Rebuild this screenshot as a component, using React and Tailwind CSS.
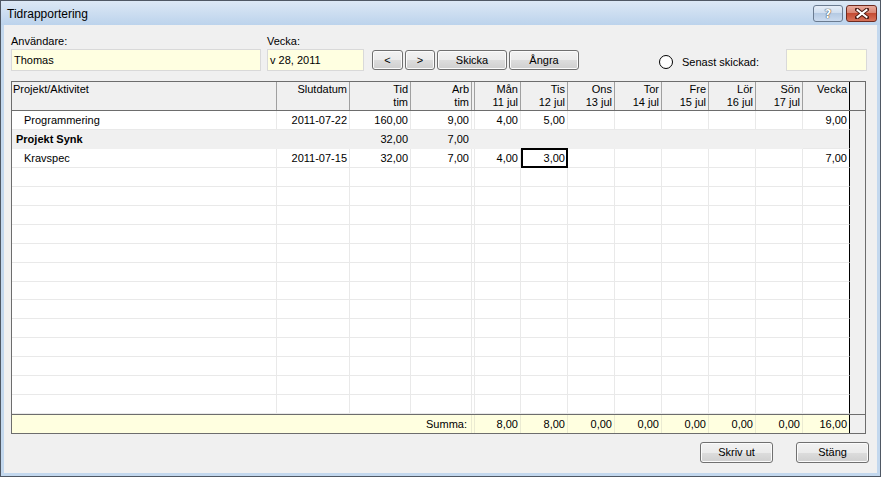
import React from 'react';

// Column widths include the right border line of each column
const COLS = [
  { key: 'name', w: 'w-[265px]' },
  { key: 'slut', w: 'w-[73px]' },
  { key: 'tid', w: 'w-[61px]' },
  { key: 'arb', w: 'w-[61px]' },
  { key: 'gap', w: 'w-[3px]' },
  { key: 'man', w: 'w-[46px]' },
  { key: 'tis', w: 'w-[47px]' },
  { key: 'ons', w: 'w-[47px]' },
  { key: 'tor', w: 'w-[47px]' },
  { key: 'fre', w: 'w-[47px]' },
  { key: 'lor', w: 'w-[47px]' },
  { key: 'son', w: 'w-[47px]' },
  { key: 'vecka', w: 'w-[47px]' },
];

const HEADER = {
  name: ['Projekt/Aktivitet'],
  slut: ['Slutdatum'],
  tid: ['Tid', 'tim'],
  arb: ['Arb', 'tim'],
  gap: [],
  man: ['Mån', '11 jul'],
  tis: ['Tis', '12 jul'],
  ons: ['Ons', '13 jul'],
  tor: ['Tor', '14 jul'],
  fre: ['Fre', '15 jul'],
  lor: ['Lör', '16 jul'],
  son: ['Sön', '17 jul'],
  vecka: ['Vecka'],
};

const ROWS = [
  { name: 'Programmering', indent: true, slut: '2011-07-22', tid: '160,00', arb: '9,00', man: '4,00', tis: '5,00', vecka: '9,00' },
  { name: 'Projekt Synk', group: true, tid: '32,00', arb: '7,00' },
  { name: 'Kravspec', indent: true, slut: '2011-07-15', tid: '32,00', arb: '7,00', man: '4,00', tis: '3,00', vecka: '7,00', selected: 'tis' },
];

const SUMS = { man: '8,00', tis: '8,00', ons: '0,00', tor: '0,00', fre: '0,00', lor: '0,00', son: '0,00', vecka: '16,00' };

const WinButton = ({ children, className = '' }) => (
  <button
    className={`flex items-center justify-center rounded-[3px] border border-[#707070] bg-[linear-gradient(#f2f2f2_0%,#ebebeb_50%,#dddddd_50%,#cfcfcf_100%)] shadow-[inset_0_0_0_1px_#fbfbfb] text-[11px] leading-none text-black ${className}`}
  >
    {children}
  </button>
);

const Field = ({ label, value, width }) => (
  <div className={`flex flex-col ${width}`}>
    <span className="leading-[13px] mb-[1px]">{label}</span>
    <div className="h-[22px] border border-[#d9d9d9] bg-[#ffffe1] pl-[2px] flex items-center">
      {value}
    </div>
  </div>
);

const HeaderRow = () => (
  <div className="flex h-[29px] border-b border-[#6d6d6d] bg-[#f0f0f0]">
    {COLS.map((c) => {
      const lines = HEADER[c.key];
      const border = c.key === 'vecka' ? 'border-black' : 'border-[#a0a0a0]';
      const align = c.key === 'name' ? 'text-left pl-[1px]' : 'text-right pr-[2px]';
      return (
        <div key={c.key} className={`${c.w} shrink-0 h-full border-r ${border} ${align} pt-[1px] leading-[13px]`}>
          {lines.map((l) => (
            <div key={l}>{l}</div>
          ))}
        </div>
      );
    })}
    <div className="flex-1" />
  </div>
);

const DataRow = ({ row }) => (
  <div className={`flex h-[19px] ${row.group ? 'bg-[#f0f0f0]' : 'bg-white'}`}>
    {COLS.map((c) => {
      const val = row[c.key];
      const isSel = row.selected === c.key;
      let cls = `${c.w} shrink-0 flex items-center`;
      if (isSel) {
        cls += ' -mt-px h-[20px] border-2 border-black relative';
      } else if (c.key === 'vecka') {
        cls += ' h-full border-r border-r-black border-b border-b-[#e9e9e9]';
      } else if (row.group) {
        cls += ' h-full border-r border-b border-[#f0f0f0]';
      } else {
        cls += ' h-full border-r border-b border-[#e9e9e9]';
      }
      if (c.key === 'name') {
        cls += row.group ? ' pl-[4px] font-bold justify-start' : ' pl-[12px] justify-start';
      } else {
        cls += isSel ? ' justify-end pr-[1px]' : ' justify-end pr-[2px]';
      }
      return (
        <div key={c.key} className={cls}>
          {val}
        </div>
      );
    })}
    <div className="flex-1 bg-[#f0f0f0]" />
  </div>
);

const EmptyRow = () => <DataRow row={{}} />;

const SumRow = () => (
  <div className="flex h-[19px] border-t border-[#6d6d6d] bg-[#ffffe0]">
    <div className="w-[460px] shrink-0 h-full border-r border-[#ebebd2] flex items-center justify-end pr-[4px]">Summa:</div>
    {COLS.slice(4).map((c) => (
      <div
        key={c.key}
        className={`${c.w} shrink-0 h-full border-r ${c.key === 'vecka' ? 'border-black' : 'border-[#ebebd2]'} flex items-center justify-end pr-[2px]`}
      >
        {SUMS[c.key]}
      </div>
    ))}
    <div className="flex-1 bg-[#f0f0f0]" />
  </div>
);

export default function App() {
  return (
    <div className="w-[881px] h-[477px] border border-[#4f5864] bg-[#c3d8ee] flex flex-col font-['Liberation_Sans',Arial,sans-serif] text-[11px] text-black select-none overflow-hidden">
      {/* Titelrad */}
      <div className="h-[24px] shrink-0 flex bg-[linear-gradient(#dce8f5,#bcd3ec)]">
        <span className="self-center pl-[6px] pt-[2px] text-[12px]">Tidrapportering</span>
        <div className="ml-auto mt-[4px] mr-[3px] flex gap-[3px] self-start">
          <div className="w-[30px] h-[17px] rounded-[3px] border border-[#6a7b90] bg-[linear-gradient(#e6eef8_0%,#cddcee_50%,#b5cae3_50%,#cbdbef_100%)] flex items-center justify-center">
            <span className="font-['DejaVu_Sans',sans-serif] font-bold text-[12px] leading-none text-white [text-shadow:0_0_1px_#333,0_0_1px_#333]">?</span>
          </div>
          <div className="w-[31px] h-[17px] rounded-[3px] border border-[#6e2b20] bg-[linear-gradient(#e9ab9e_0%,#d8826e_50%,#c44b33_50%,#d8735a_100%)] flex items-center justify-center">
            <svg width="14" height="11" viewBox="0 0 14 11">
              <path d="M2 1.5 L12 9.5 M12 1.5 L2 9.5" stroke="#4a1a12" strokeWidth="4" strokeLinecap="square" />
              <path d="M2.5 2 L11.5 9 M11.5 2 L2.5 9" stroke="#fff" strokeWidth="2" strokeLinecap="square" />
            </svg>
          </div>
        </div>
      </div>

      {/* Innehåll */}
      <div className="flex-1 mx-[3px] mb-[3px] bg-[#f0f0f0] flex flex-col pt-[10px]">
        <div className="flex items-end pl-[7px]">
          <Field label="Användare:" value="Thomas" width="w-[250px]" />
          <div className="w-[6px]" />
          <Field label="Vecka:" value="v 28, 2011" width="w-[97px]" />
          <div className="flex gap-[2px] ml-[8px] mb-[1px]">
            <WinButton className="w-[31px] h-[20px]">&lt;</WinButton>
            <WinButton className="w-[30px] h-[20px]">&gt;</WinButton>
            <WinButton className="w-[70px] h-[20px]">Skicka</WinButton>
            <WinButton className="w-[70px] h-[20px]">Ångra</WinButton>
          </div>
          <div className="flex items-center h-[18px] ml-[80px]">
            <span className="w-[14px] h-[14px] rounded-full border border-black bg-white" />
            <span className="ml-[9px]">Senast skickad:</span>
          </div>
          <div className="ml-[27px] w-[81px] h-[22px] border border-[#d9d9d9] bg-[#ffffe1]" />
        </div>

        {/* Tabell */}
        <div className="ml-[7px] mt-[10px] w-[855px] border border-[#6d6d6d] flex flex-col">
          <HeaderRow />
          <div className="h-[303px] overflow-hidden flex flex-col">
            {ROWS.map((r) => (
              <DataRow key={r.name} row={r} />
            ))}
            {Array.from({ length: 13 }, (_, i) => (
              <EmptyRow key={i} />
            ))}
          </div>
          <SumRow />
        </div>

        <div className="flex justify-end gap-[23px] pr-[8px] mt-[8px]">
          <WinButton className="w-[73px] h-[21px]">Skriv ut</WinButton>
          <WinButton className="w-[73px] h-[21px]">Stäng</WinButton>
        </div>
      </div>
    </div>
  );
}
